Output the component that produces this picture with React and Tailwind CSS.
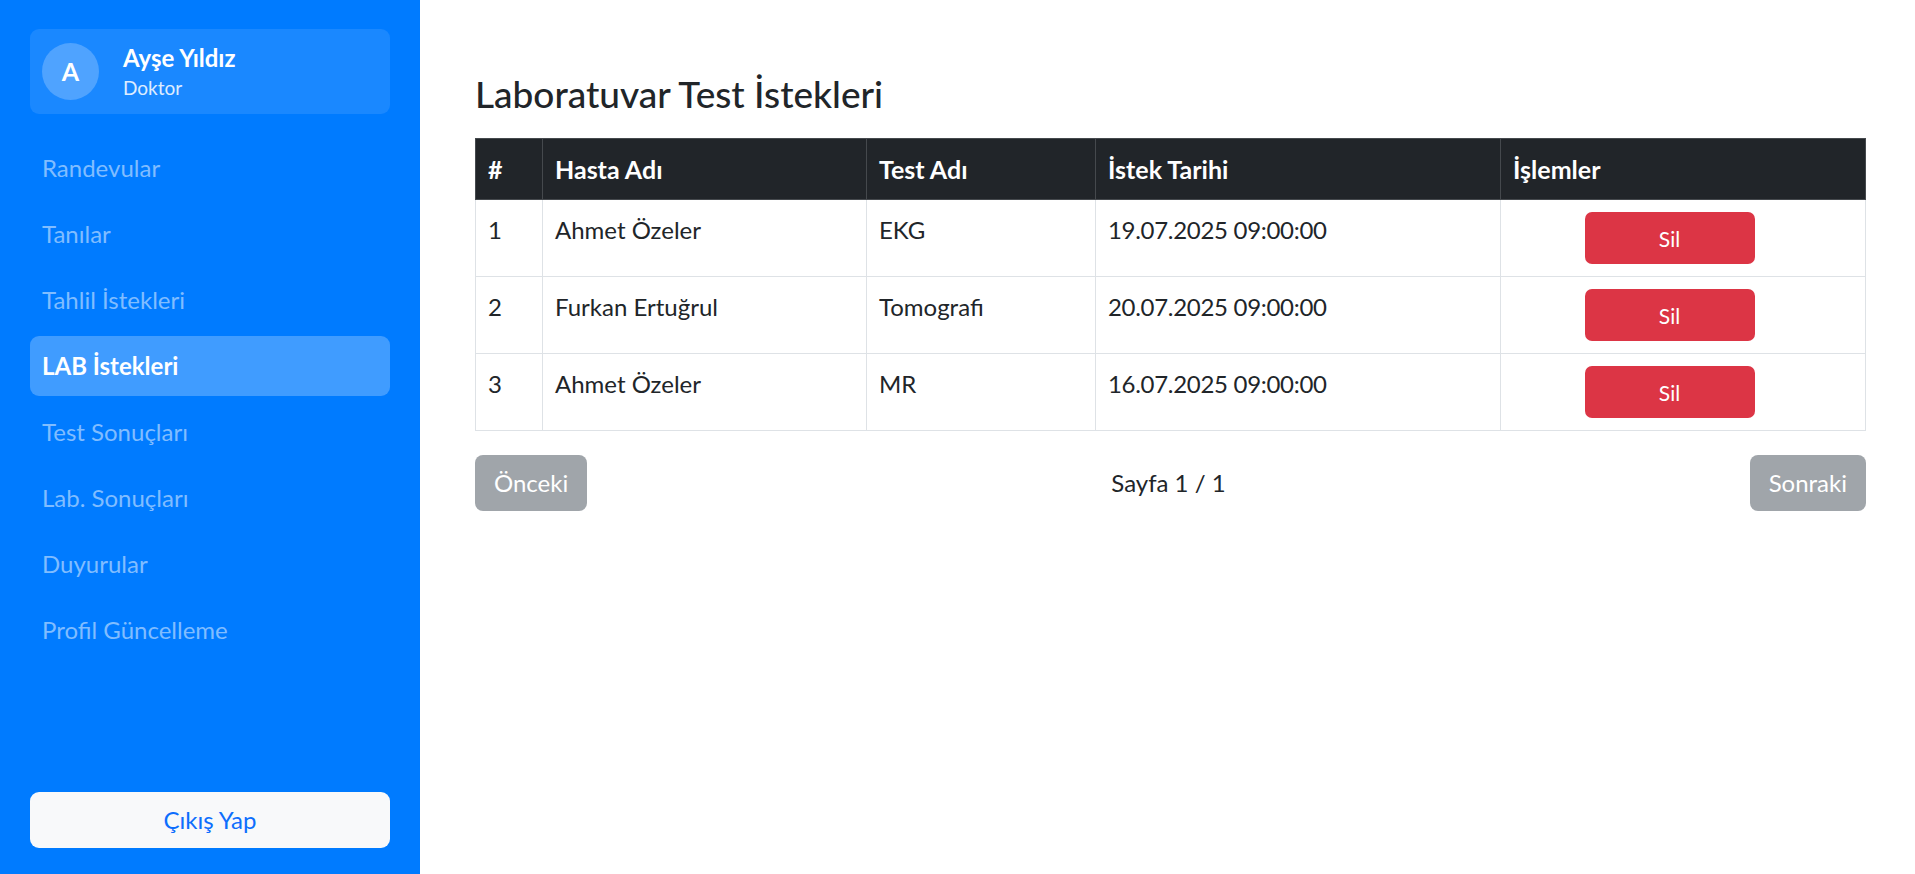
import { useState } from "react";

const navItems = [
  "Randevular",
  "Tanılar",
  "Tahlil İstekleri",
  "LAB İstekleri",
  "Test Sonuçları",
  "Lab. Sonuçları",
  "Duyurular",
  "Profil Güncelleme",
];

const requests = [
  { id: 1, patient: "Ahmet Özeler", test: "EKG", date: "19.07.2025 09:00:00" },
  { id: 2, patient: "Furkan Ertuğrul", test: "Tomografi", date: "20.07.2025 09:00:00" },
  { id: 3, patient: "Ahmet Özeler", test: "MR", date: "16.07.2025 09:00:00" },
];

const Sidebar = ({ active, setActive }) => {
  return (
    <aside className="w-[420px] shrink-0 h-[874px] bg-[#007bff] px-[30px] pt-[29px] pb-[26px] flex flex-col">
      <div className="h-[85px] bg-[#1a88ff] rounded-[9px] px-3 flex items-center mb-6">
        <div className="w-[57px] h-[57px] rounded-full bg-[#4fa3ff] flex items-center justify-center text-white font-bold text-[25px] mr-6">
          A
        </div>
        <div className="pt-[4px]">
          <div className="text-white font-bold text-[24px] leading-[28px]">Ayşe Yıldız</div>
          <div className="text-white/85 text-[19px] leading-[32px]">Doktor</div>
        </div>
      </div>

      <nav className="flex flex-col gap-[6px]">
        {navItems.map((item) => (
          <button
            key={item}
            onClick={() => setActive(item)}
            className={
              active === item
                ? "h-[60px] px-3 text-left rounded-[9px] bg-[#409cff] text-white font-bold text-[24px]"
                : "h-[60px] px-3 text-left rounded-[9px] text-[#80bdff] text-[24px]"
            }
          >
            {item}
          </button>
        ))}
      </nav>

      <button className="mt-auto h-[56px] w-full rounded-[9px] bg-[#f8f9fa] text-[#0d6efd] text-[24px]">
        Çıkış Yap
      </button>
    </aside>
  );
};

const App = () => {
  const [active, setActive] = useState("LAB İstekleri");

  return (
    <div className="flex w-full h-[874px] bg-white font-[Lato,sans-serif] text-[#212529] overflow-hidden">
      <Sidebar active={active} setActive={setActive} />

      <main className="flex-1 pl-[55px] pr-[49px] pt-[72px]">
        <h4 className="text-[37px] leading-[43px] font-medium mb-[23px]">Laboratuvar Test İstekleri</h4>

        <table className="w-full table-fixed border-collapse border border-[#dee2e6] text-[24px] leading-[36px]">
          <thead className="bg-[#212529] text-white text-[25px]">
            <tr>
              <th className="w-[67px] px-3 py-3 text-left font-bold border border-[#45494d]">#</th>
              <th className="w-[324px] px-3 py-3 text-left font-bold border border-[#45494d]">Hasta Adı</th>
              <th className="w-[229px] px-3 py-3 text-left font-bold border border-[#45494d]">Test Adı</th>
              <th className="w-[405px] px-3 py-3 text-left font-bold border border-[#45494d]">İstek Tarihi</th>
              <th className="px-3 py-3 text-left font-bold border border-[#45494d]">İşlemler</th>
            </tr>
          </thead>
          <tbody>
            {requests.map((r) => (
              <tr key={r.id}>
                <td className="px-3 py-3 align-top border border-[#dee2e6]">{r.id}</td>
                <td className="px-3 py-3 align-top border border-[#dee2e6]">{r.patient}</td>
                <td className="px-3 py-3 align-top border border-[#dee2e6]">{r.test}</td>
                <td className="px-3 py-3 align-top border border-[#dee2e6] tracking-[-0.3px]">{r.date}</td>
                <td className="px-3 py-3 align-top border border-[#dee2e6]">
                  <div className="flex justify-center pr-[27px]">
                    <button className="w-[170px] h-[52px] rounded-[7px] bg-[#dc3545] text-white text-[21px] leading-none">
                      Sil
                    </button>
                  </div>
                </td>
              </tr>
            ))}
          </tbody>
        </table>

        <div className="mt-6 flex items-center justify-between">
          <button disabled className="h-[56px] px-[19px] rounded-[8px] bg-[#a0a5aa] text-white text-[24px]">
            Önceki
          </button>
          <span className="text-[24px]">Sayfa 1 / 1</span>
          <button disabled className="h-[56px] px-[19px] rounded-[8px] bg-[#a0a5aa] text-white text-[24px]">
            Sonraki
          </button>
        </div>
      </main>
    </div>
  );
};

export default App;
